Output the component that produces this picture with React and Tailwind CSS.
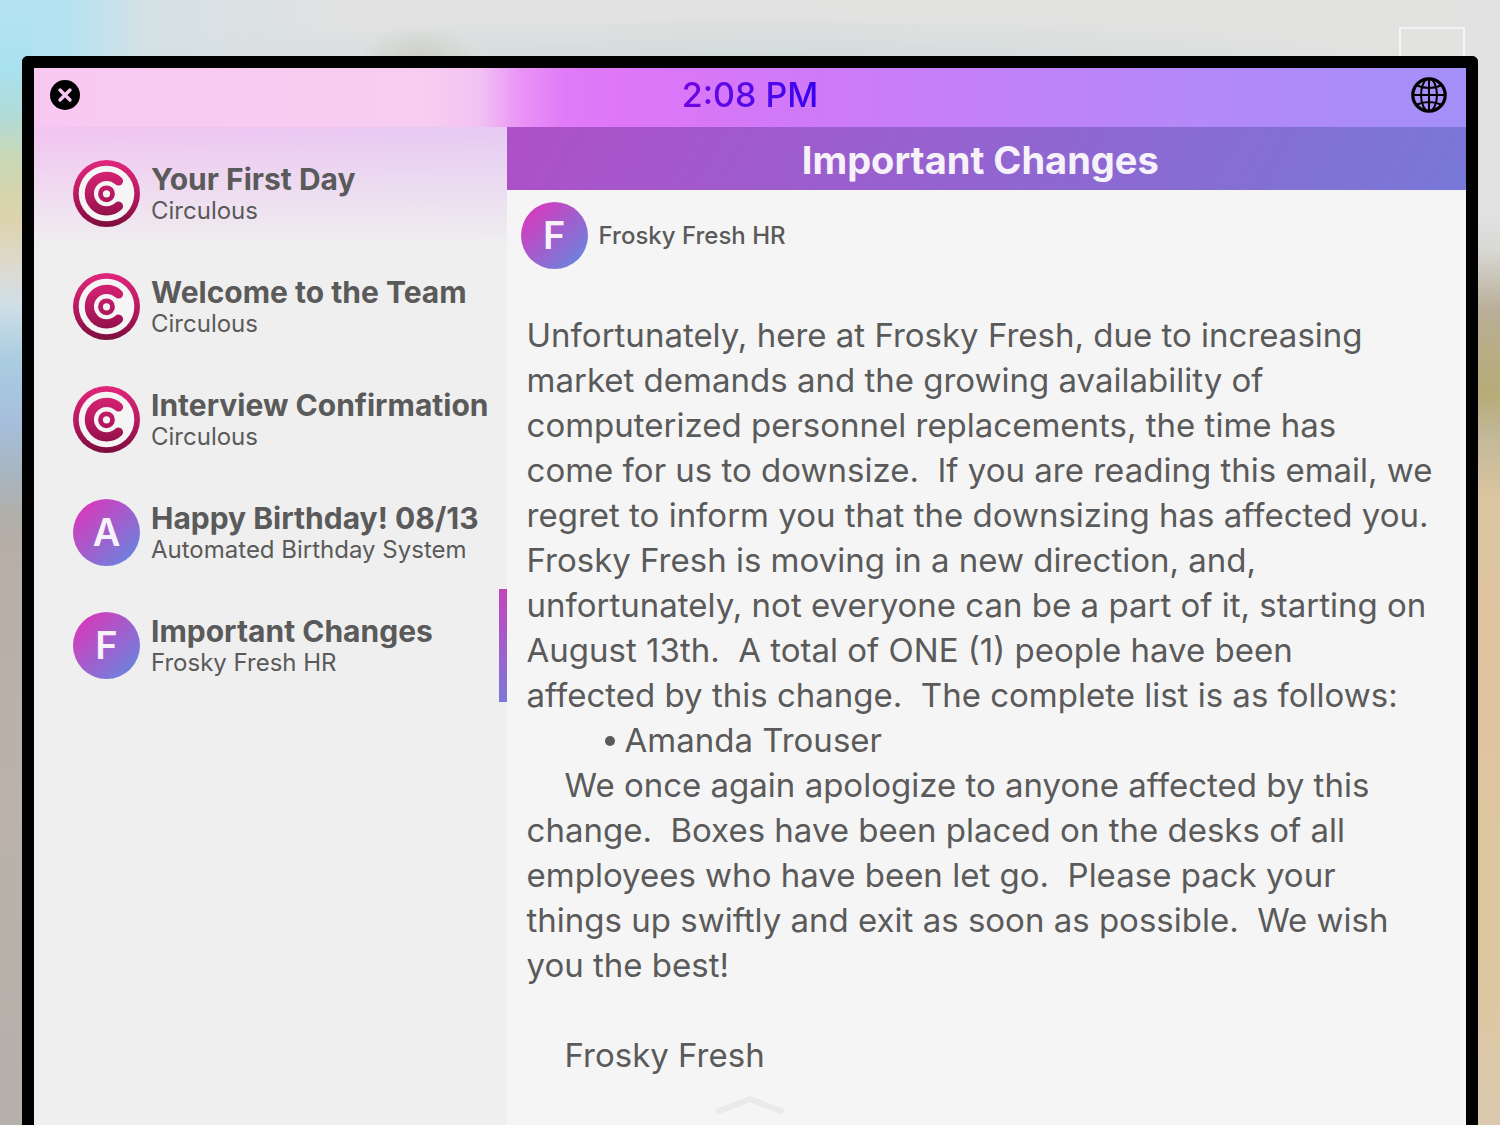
import { useState } from 'react';

const messages = [
  { id: 1, subject: 'Your First Day', sender: 'Circulous' },
  { id: 2, subject: 'Welcome to the Team', sender: 'Circulous' },
  { id: 3, subject: 'Interview Confirmation', sender: 'Circulous' },
  { id: 4, subject: 'Happy Birthday! 08/13', sender: 'Automated Birthday System', initial: 'A' },
  { id: 5, subject: 'Important Changes', sender: 'Frosky Fresh HR', initial: 'F' },
];

const intro = `Unfortunately, here at Frosky Fresh, due to increasing
market demands and the growing availability of
computerized personnel replacements, the time has
come for us to downsize.  If you are reading this email, we
regret to inform you that the downsizing has affected you.
Frosky Fresh is moving in a new direction, and,
unfortunately, not everyone can be a part of it, starting on
August 13th.  A total of ONE (1) people have been
affected by this change.  The complete list is as follows:`;

const closing = `We once again apologize to anyone affected by this
change.  Boxes have been placed on the desks of all
employees who have been let go.  Please pack your
things up swiftly and exit as soon as possible.  We wish
you the best!`;

function CirculousLogo() {
  return (
    <svg viewBox="0 0 67 67" className="size-[67px] shrink-0" aria-hidden="true">
      <defs>
        <linearGradient id="circulous" x1="0" y1="0" x2="0" y2="67" gradientUnits="userSpaceOnUse">
          <stop offset="0" stopColor="#e0267c" />
          <stop offset="0.5" stopColor="#bb1a62" />
          <stop offset="1" stopColor="#7c0d3d" />
        </linearGradient>
      </defs>
      <circle cx="33.5" cy="33.5" r="33.5" fill="url(#circulous)" />
      <circle cx="33.5" cy="33.5" r="27.8" fill="#f5f5f5" />
      <path d="M45.5 21A17.3 17.3 0 1 0 45.5 46.2" fill="none" stroke="url(#circulous)" strokeWidth="9.2" strokeLinecap="round" />
      <circle cx="33.5" cy="33.8" r="6" fill="none" stroke="url(#circulous)" strokeWidth="4.8" />
    </svg>
  );
}

function Avatar({ initial }) {
  if (!initial) return <CirculousLogo />;
  return (
    <div className="size-[67px] shrink-0 rounded-full bg-[linear-gradient(135deg,#d63abc_12%,#6a84de_90%)] flex items-center justify-center text-[38px] font-semibold text-[#f7f2fa]">
      {initial}
    </div>
  );
}

function GlobeIcon() {
  return (
    <svg viewBox="0 0 36 36" className="size-9" fill="none" stroke="#000" strokeWidth="2" aria-hidden="true">
      <circle cx="18" cy="18" r="16.2" strokeWidth="3.2" />
      <ellipse cx="18" cy="18" rx="8" ry="16.2" />
      <path d="M18 2v32M2 18h32M6 8.5Q18 13.5 30 8.5M6 27.5Q18 22.5 30 27.5" />
    </svg>
  );
}

export default function App() {
  const [selected, setSelected] = useState(5);

  return (
    <div className="relative flex min-h-screen bg-[linear-gradient(to_right,#b3e3f2_0,#b3e3f2_4%,#d5e1e5_10%,#e2e2e2_24%,#e2e2e0_100%)] font-['Inter',sans-serif] text-[#5a5a5a]">
      {/* Blurred room behind the tablet */}
      <div className="absolute inset-0 bg-[radial-gradient(ellipse_60px_36px_at_28%_62px,#cccdc2,transparent),radial-gradient(ellipse_45%_50px_at_50%_64px,#cfdadb,transparent)]" />
      <div className="absolute left-0 inset-y-0 w-8 bg-[linear-gradient(#b5e3f2_0,#a9e1ef_70px,#b0dbd8_115px,#c8d8b8_155px,#d6d5ac_195px,#ddd3ae_222px,#dcdcd6_275px,#d0dfe7_305px,#aacde1_360px,#a6bfdc_420px,#a8b5c0_475px,#b0afa9_515px,#b9aea5_560px,#bab2ab_800px,#b5b0aa_100%)]" />
      <div className="absolute right-0 inset-y-0 w-8 bg-[linear-gradient(#e2e2e2_0,#e1e1e1_215px,#d8d8d4_250px,#b9ae98_310px,#b8ad85_350px,#b7ab78_395px,#c2b898_435px,#dcc5a1_500px,#dec4a0_600px,#dec79e_950px,#dac9af_100%)]" />
      <div className="absolute right-[35px] top-[27px] h-10 w-[66px] border-2 border-[#f3f3f3]" />

      <main className="relative mx-[22px] mt-14 flex min-w-0 flex-1 flex-col rounded-t-md border-12 border-b-0 border-black bg-[#efefef]">
        <header className="grid h-[59px] shrink-0 grid-cols-3 items-center bg-[linear-gradient(to_right,#f8c8f2_0%,#f8cdf1_27%,#f2c3f2_31%,#e993f6_34%,#e07bf8_37%,#de76f8_41%,#d079f8_53%,#b588f8_80%,#a48ff8_100%)] px-4 pb-1.5">
          <button type="button" aria-label="Close" className="flex size-[30px] items-center justify-center rounded-full bg-black">
            <svg viewBox="0 0 30 30" className="size-[30px]" aria-hidden="true">
              <path d="M10 10l10 10M20 10L10 20" stroke="#f8c8f2" strokeWidth="3.4" strokeLinecap="round" />
            </svg>
          </button>
          <time className="bg-linear-to-r from-[#6d00e0] from-35% to-[#3400f0] to-65% bg-clip-text text-center text-[34px] leading-10 font-medium text-transparent">2:08 PM</time>
          <button type="button" aria-label="Language" className="mr-[3px] justify-self-end">
            <GlobeIcon />
          </button>
        </header>

        <div className="flex flex-1">
          <nav aria-label="Messages" className="w-[33%] shrink-0 bg-[linear-gradient(to_bottom,transparent,#efefef_120px),linear-gradient(to_right,#f2c4f2,#e6caf3)] pt-2.5">
            {messages.map((msg) => (
              <button
                key={msg.id}
                type="button"
                onClick={() => setSelected(msg.id)}
                className="relative flex h-[113px] w-full items-center gap-[11px] pl-[39px] text-left"
              >
                <Avatar initial={msg.initial} />
                <span className="pt-0.5 whitespace-nowrap">
                  <span className="block text-[30px] leading-8 font-bold">{msg.subject}</span>
                  <span className="block text-[24px] leading-8">{msg.sender}</span>
                </span>
                {selected === msg.id && (
                  <span className="absolute right-0 inset-y-0 w-2 bg-[linear-gradient(#c445bd,#7d78d8)]" />
                )}
              </button>
            ))}
          </nav>

          <article className="flex min-w-0 flex-1 flex-col bg-[#f5f5f5]">
            <h1 className="flex h-[63px] items-center justify-center bg-[linear-gradient(120deg,#ae50c8,#7878d8)] pt-1 pr-3 text-[38px] font-bold text-[#f7f2fa]">
              Important Changes
            </h1>
            <div className="flex items-center gap-[11px] px-3.5 pt-3">
              <Avatar initial="F" />
              <p className="text-[24px] font-medium">Frosky Fresh HR</p>
            </div>
            <div className="px-5 pt-11 text-[33px] leading-[45px] whitespace-pre-wrap">
              <p>{intro}</p>
              <ul className="pl-[78px]">
                <li className="flex items-center gap-2.5">
                  <span className="size-2.5 rounded-full bg-[#5a5a5a]" />
                  Amanda Trouser
                </li>
              </ul>
              <p className="indent-[38px]">{closing}</p>
              <p className="pt-[45px] indent-[38px]">Frosky Fresh</p>
            </div>
          </article>
        </div>

        {/* Pull-up handle */}
        <svg viewBox="0 0 68 20" className="absolute bottom-2.5 left-1/2 h-5 w-[68px] -translate-x-1/2" fill="none" aria-hidden="true">
          <path d="M3 16L34 4L65 16" stroke="#eaeaea" strokeWidth="6" strokeLinecap="round" strokeLinejoin="round" />
        </svg>
      </main>
    </div>
  );
}
